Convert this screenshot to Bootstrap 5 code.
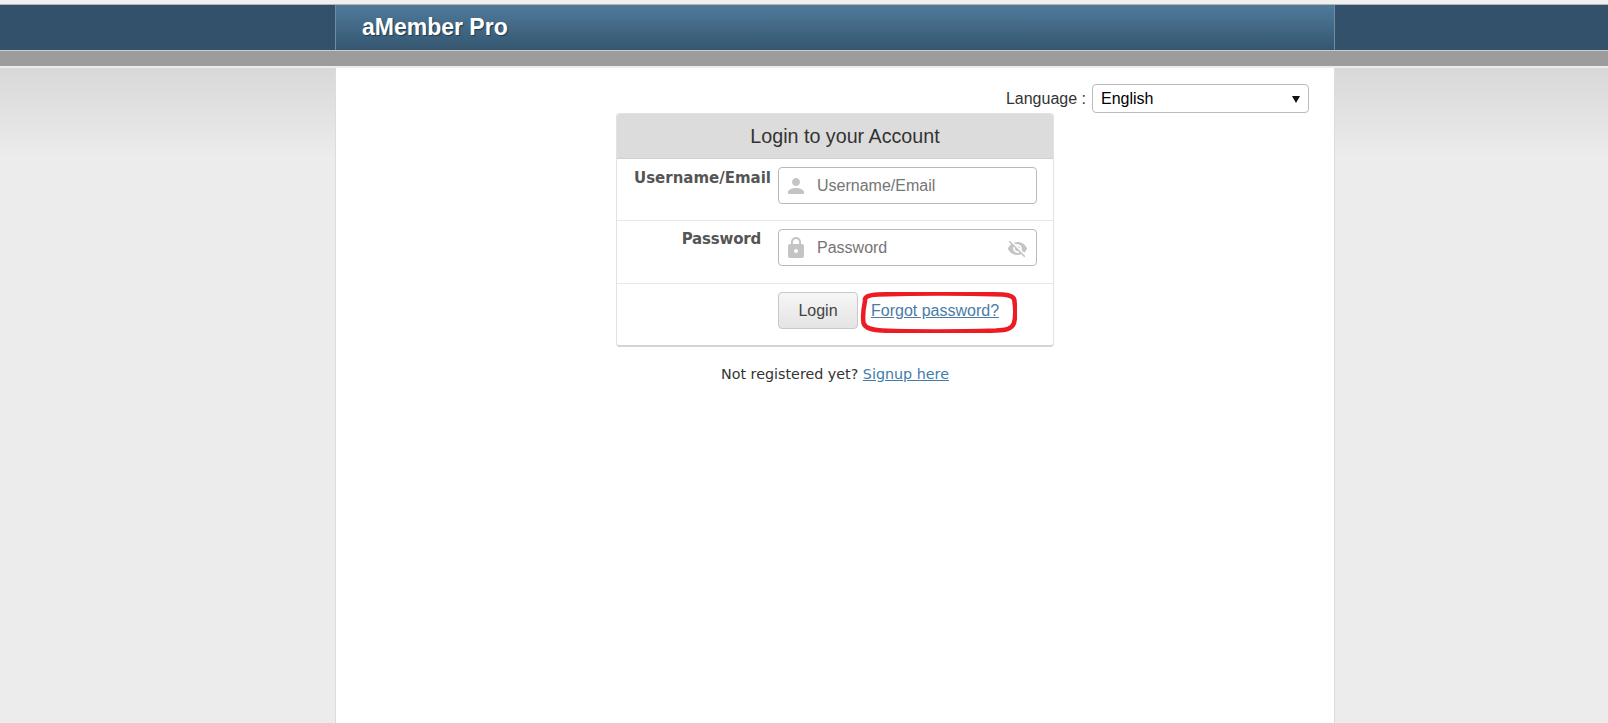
<!DOCTYPE html>
<html lang="en">
<head>
<meta charset="utf-8">
<title>aMember Pro</title>
<link href="https://cdn.jsdelivr.net/npm/bootstrap@5.3.0/dist/css/bootstrap.min.css" rel="stylesheet">
<style>
html,body{height:100%;}
body{background:#ececec;font-family:"Liberation Sans",Arial,sans-serif;font-size:16px;color:#333;overflow:hidden;}
.top-strip{height:4px;background:#f0f0f0;}
.hdr-row{height:47px;background:#33516b;border-top:1px solid #b4b4b4;border-bottom:1px solid #c8ccd0;}
.side-l{width:335px;flex:none;}
.mid{width:1000px;flex:none;}
.hdr-mid{background:linear-gradient(#4f7a9c,#35566f);border-left:1px solid #6f8ca3;border-right:1px solid #6f8ca3;padding-left:26px;}
.brand-txt{color:#fff;font-size:23px;font-weight:700;line-height:45px;text-shadow:1px 1px 1px #223a4d;}
.sub-bar{height:15px;background:#9c9c9c;}
.light-line{height:2px;background:#ececec;}
.main-row{height:656px;}
.side-bg{background:linear-gradient(#d8d8d8,#ececec 90px);}
.mid-body{background:#fff;border-left:1px solid #dcdcdc;border-right:1px solid #dcdcdc;padding:16px 25px 0 0;}
.lang-lbl{font-size:16px;color:#333;margin-right:6px;}
.lang-sel{width:217px;height:29px;padding:0 8px;font-size:16px;color:#000;border:1px solid #bbb;border-radius:4px;
 background-image:url("data:image/svg+xml,%3Csvg xmlns='http://www.w3.org/2000/svg' width='8' height='8'%3E%3Cpath d='M0 1h8L4 8z' fill='%23111'/%3E%3C/svg%3E");
 background-size:8px 8px;background-position:right 8px center;font-family:"Liberation Sans",Arial,sans-serif;}
.login-box{width:438px;margin:0 0 0 280px;border:1px solid #e2e2e2;border-bottom:2px solid #d4d4d4;border-radius:4px;background:#fff;}
.login-head{height:45px;background:#dcdcdc;border-bottom:1px solid #cfcfcf;border-radius:3px 3px 0 0;font-size:19.700px;line-height:45px;color:#333;text-align:center;padding-left:20px;}
.form-line{border-bottom:1px solid #e8e8e8;height:62px;padding-top:8px;}
.form-line.second{height:63px;}
.form-line.last{border-bottom:0;height:61px;padding-top:8px;}
.lbl-col{width:161px;flex:none;text-align:right;font-family:"DejaVu Sans",sans-serif;font-weight:700;font-size:15px;color:#555;line-height:18px;padding-top:2px;padding-right:7px;}
.lbl-col.inset{padding-right:17px;padding-top:1px;letter-spacing:-.2px;}
.field-wrap{width:259px;height:37px;}
.field{height:37px;border:1px solid #b9b9b9;border-radius:4px;padding:0 30px 0 38px;font-size:16px;color:#333;}
.field::placeholder{color:#757575;opacity:1;}
.ico{position:absolute;fill:#c4c4c4;}
.ico-left{left:6px;top:7px;}
.ico-right{right:9px;top:9px;}
.login-btn{width:80px;height:37px;padding:0;font-size:16px;color:#444;background:linear-gradient(#f6f6f6,#e4e4e4);border:1px solid #c8c8c8;border-radius:4px;}
.login-lnk{position:relative;margin-left:13px;line-height:37px;color:#4a7ba6;font-size:16px;}
.mark-ring{position:absolute;left:-11px;top:0;}
.below-txt{font-family:"DejaVu Sans",sans-serif;font-size:14.300px;color:#333;padding-top:17px;width:438px;margin-left:280px;text-align:center;}
.below-txt a{color:#3f7cac;}
</style>
</head>
<body>
<div class="top-strip"></div>
<div class="hdr-row d-flex">
  <div class="side-l"></div>
  <div class="mid hdr-mid"><span class="brand-txt">aMember Pro</span></div>
  <div class="flex-fill"></div>
</div>
<div class="sub-bar"></div>
<div class="light-line"></div>
<div class="main-row d-flex">
  <div class="side-l side-bg"></div>
  <div class="mid mid-body">
    <div class="d-flex justify-content-end align-items-center">
      <span class="lang-lbl">Language :</span>
      <select class="form-select lang-sel"><option>English</option></select>
    </div>
    <div class="login-box">
      <div class="login-head">Login to your Account</div>
      <div class="form-line d-flex">
        <div class="lbl-col">Username/Email</div>
        <div class="field-wrap position-relative">
          <svg class="ico ico-left" width="24" height="24" viewBox="0 0 24 24"><path d="M12 12c2.210 0 4-1.790 4-4s-1.790-4-4-4-4 1.790-4 4 1.790 4 4 4zm0 2c-2.670 0-8 1.340-8 4v2h16v-2c0-2.660-5.330-4-8-4z"/></svg>
          <input class="form-control field" type="text" placeholder="Username/Email">
        </div>
      </div>
      <div class="form-line second d-flex">
        <div class="lbl-col inset">Password</div>
        <div class="field-wrap position-relative">
          <svg class="ico ico-left" width="24" height="24" viewBox="0 0 24 24"><path d="M18 8h-1V6c0-2.760-2.240-5-5-5S7 3.240 7 6v2H6c-1.100 0-2 .9-2 2v10c0 1.100.9 2 2 2h12c1.100 0 2-.9 2-2V10c0-1.100-.9-2-2-2zm-6 9c-1.100 0-2-.9-2-2s.9-2 2-2 2 .9 2 2-.9 2-2 2zm3.100-9H8.900V6c0-1.710 1.390-3.100 3.100-3.100 1.710 0 3.100 1.390 3.100 3.100v2z"/></svg>
          <svg class="ico ico-right" width="21" height="21" viewBox="0 0 24 24"><path d="M12 7c2.760 0 5 2.240 5 5 0 .65-.13 1.260-.36 1.830l2.920 2.920c1.510-1.260 2.700-2.890 3.430-4.750-1.730-4.390-6-7.500-11-7.500-1.400 0-2.740.25-3.980.7l2.160 2.160C10.740 7.130 11.350 7 12 7zM2 4.270l2.280 2.280.46.46C3.080 8.300 1.780 10.020 1 12c1.730 4.390 6 7.500 11 7.500 1.550 0 3.030-.3 4.380-.84l.42.42L19.730 22 21 20.730 3.270 3 2 4.270zM7.530 9.800l1.550 1.550c-.05.21-.08.43-.08.65 0 1.660 1.340 3 3 3 .22 0 .44-.03.65-.08l1.550 1.550c-.67.33-1.410.53-2.200.53-2.760 0-5-2.240-5-5 0-.79.2-1.530.53-2.200zm4.310-.78l3.150 3.150.02-.16c0-1.660-1.340-3-3-3l-.17.01z"/></svg>
          <input class="form-control field" type="password" placeholder="Password">
        </div>
      </div>
      <div class="form-line last d-flex">
        <div class="lbl-col"></div>
        <button class="btn login-btn" type="button">Login</button>
        <a class="login-lnk" href="#">Forgot password?
          <svg class="mark-ring" width="157" height="41" viewBox="0 0 157 41"><path d="M5 9C4 4 10 3 18 2.500 50 1.500 110 1.500 143 2.500 150 3 155 5 154.500 10 155.500 17 155.500 25 154 31 152 37 146 38 136 38.500 100 39.500 50 39.500 22 38.500 11 38 5 36 3.500 31 2.500 24 3.500 16 5 9z" fill="none" stroke="#ed1c24" stroke-width="4.500"/></svg>
        </a>
      </div>
    </div>
    <div class="below-txt">Not registered yet? <a href="#">Signup here</a></div>
  </div>
  <div class="flex-fill side-bg"></div>
</div>
</body>
</html>
